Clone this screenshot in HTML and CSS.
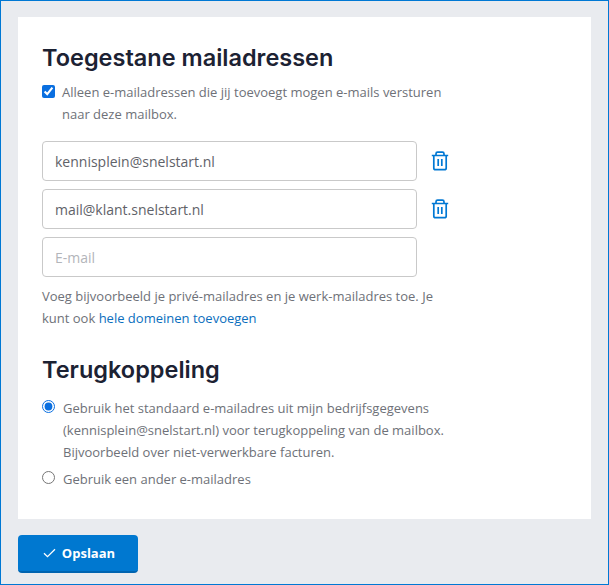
FILE: index.html
```html
<!DOCTYPE html>
<html lang="nl">
<head>
  <meta charset="UTF-8" />
  <title>Toegestane mailadressen</title>
  <link rel="stylesheet" href="styles.css">
</head>
<body>
  <main class="card">
    <h2>Toegestane mailadressen</h2>
    <label class="option check-option">
      <input type="checkbox" checked />
      <span>Alleen e-mailadressen die jij toevoegt mogen e-mails versturen<br />naar deze mailbox.</span>
    </label>

    <div class="address-list">
      <div class="address-row">
        <input class="field" type="text" value="kennisplein@snelstart.nl" />
        <button class="trash" aria-label="Verwijderen">
          <svg width="18" height="20" viewBox="0 0 18 20" fill="none" stroke="currentColor" stroke-width="1.7">
            <path d="M.8 4.500h16.400M5 4.500V2.800q0-1.600 1.600-1.600h4.800q1.600 0 1.600 1.600v1.700M2.800 4.500v12.400q0 1.800 1.800 1.800h8.800q1.800 0 1.800-1.800V4.500M7.200 8v7M10.800 8v7" />
          </svg>
        </button>
      </div>
      <div class="address-row">
        <input class="field" type="text" value="mail@klant.snelstart.nl" />
        <button class="trash" aria-label="Verwijderen">
          <svg width="18" height="20" viewBox="0 0 18 20" fill="none" stroke="currentColor" stroke-width="1.7">
            <path d="M.8 4.500h16.400M5 4.500V2.800q0-1.600 1.600-1.600h4.800q1.600 0 1.600 1.600v1.700M2.800 4.500v12.400q0 1.800 1.800 1.800h8.800q1.800 0 1.800-1.800V4.500M7.200 8v7M10.800 8v7" />
          </svg>
        </button>
      </div>
      <div class="address-row">
        <input class="field" type="text" placeholder="E-mail" />
      </div>
    </div>

    <p class="hint">
      Voeg bijvoorbeeld je privé-mailadres en je werk-mailadres toe. Je<br />
      kunt ook <a href="#">hele domeinen toevoegen</a>
    </p>

    <h2 class="second">Terugkoppeling</h2>
    <label class="option radio-option">
      <input type="radio" name="feedback" checked />
      <span>Gebruik het standaard e-mailadres uit mijn bedrijfsgegevens<br />(kennisplein@snelstart.nl) voor terugkoppeling van de mailbox.<br />Bijvoorbeeld over niet-verwerkbare facturen.</span>
    </label>
    <label class="option radio-option">
      <input type="radio" name="feedback" />
      <span>Gebruik een ander e-mailadres</span>
    </label>
  </main>

  <footer class="actions">
    <button class="save">
      <svg width="13" height="10" viewBox="0 0 13 10" fill="none" stroke="currentColor" stroke-width="1.3">
        <path d="M1 5.200 4.500 8.700 12 1.200" />
      </svg>
      Opslaan
    </button>
  </footer>
</body>
</html>
```

FILE: styles.css
```css
* {
  box-sizing: border-box;
}

html, body {
  height: 100%;
}

body {
  margin: 0;
  border: 1px solid #0078d4;
  padding: 16px 17px 0;
  background: #e9ebef;
  font-family: 'Open Sans', sans-serif;
  font-size: 13px;
  color: #6e7178;
  overflow: hidden;
}

.card {
  height: 502px;
  padding: 25px 24px 0;
  background: #fff;
}

h2 {
  margin: 0;
  font-family: 'Inter', sans-serif;
  font-size: 23.5px;
  font-weight: 600;
  line-height: 32px;
  color: #1c2233;
}

h2.second {
  margin-top: 25px;
}

.option {
  display: flex;
  align-items: flex-start;
  line-height: 22px;
}

.option input {
  flex: none;
  margin: 0;
  accent-color: #0a6fe0;
}

.check-option {
  margin-top: 7px;
}

.check-option input {
  width: 13px;
  height: 13px;
  margin: 4px 7px 0 0;
}

.radio-option {
  margin-top: 5px;
}

.second + .radio-option {
  margin-top: 11px;
}

.radio-option input {
  width: 13px;
  height: 13px;
  margin: 3px 8px 0 0;
}

.address-list {
  display: flex;
  flex-direction: column;
  gap: 8px;
  margin-top: 16px;
}

.address-row {
  display: flex;
  align-items: center;
}

.field {
  width: 375px;
  height: 40px;
  padding: 0 12px;
  border: 1px solid #c9c9c9;
  border-radius: 4px;
  font-family: inherit;
  font-size: 14px;
  color: #5f6269;
}

.field::placeholder {
  color: #b3b5ba;
}

.trash {
  display: flex;
  margin-left: 14px;
  padding: 0;
  border: none;
  background: none;
  color: #0078d4;
}

.hint {
  margin: 8px 0 0;
  line-height: 22px;
}

.hint a {
  color: #0a6ebd;
  text-decoration: none;
}

.actions {
  margin-top: 16px;
}

.save {
  display: flex;
  align-items: center;
  justify-content: center;
  gap: 6px;
  width: 120px;
  height: 38px;
  padding: 0 0 0 2px;
  border: none;
  border-bottom: 2px solid #0064b0;
  border-radius: 4px;
  background: #0078d0;
  font-family: inherit;
  font-size: 13px;
  font-weight: 700;
  color: #fff;
}
```
